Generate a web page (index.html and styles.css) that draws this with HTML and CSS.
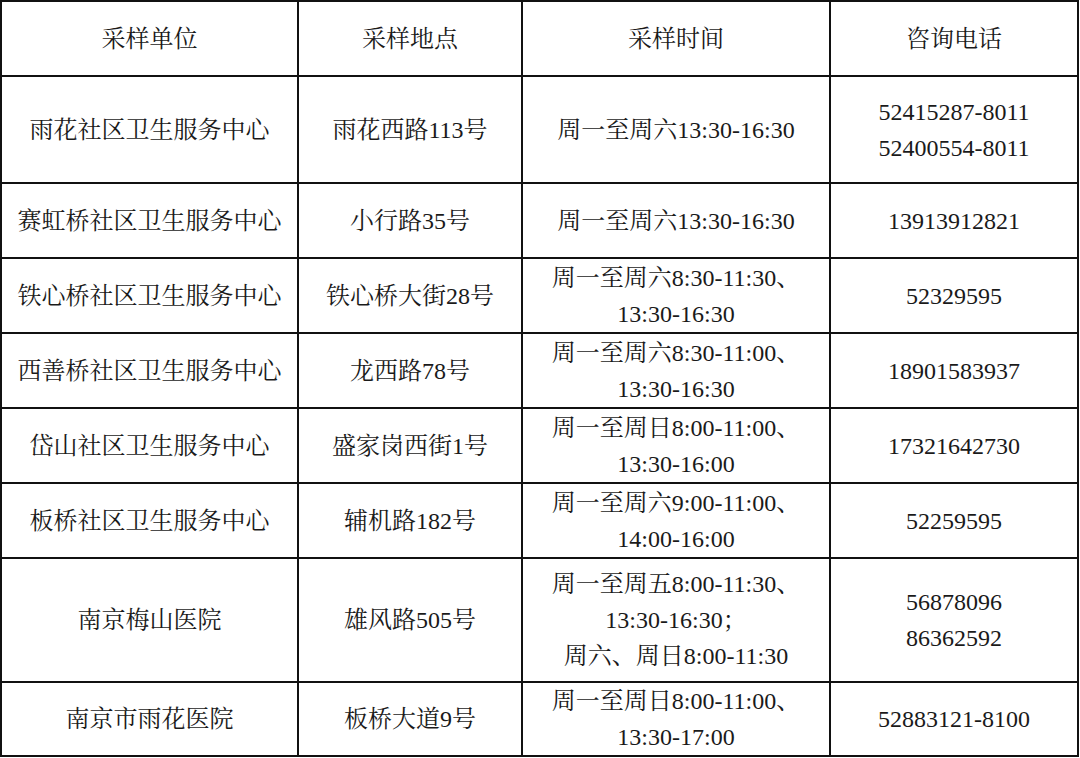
FILE: index.html
```html
<!DOCTYPE html>
<html lang="zh-CN">
<head>
<meta charset="utf-8">
<title>采样点信息</title>
<link rel="stylesheet" href="styles.css">
</head>
<body>
<table class="sites">
  <colgroup>
    <col class="c1"><col class="c2"><col class="c3"><col class="c4">
  </colgroup>
  <tr class="r-head">
    <td>采样单位</td><td>采样地点</td><td>采样时间</td><td>咨询电话</td>
  </tr>
  <tr class="r-tall">
    <td>雨花社区卫生服务中心</td><td>雨花西路113号</td><td>周一至周六13:30-16:30</td><td>52415287-8011<br>52400554-8011</td>
  </tr>
  <tr class="r-std">
    <td>赛虹桥社区卫生服务中心</td><td>小行路35号</td><td>周一至周六13:30-16:30</td><td>13913912821</td>
  </tr>
  <tr class="r-std">
    <td>铁心桥社区卫生服务中心</td><td>铁心桥大街28号</td><td>周一至周六8:30-11:30、<br>13:30-16:30</td><td>52329595</td>
  </tr>
  <tr class="r-std">
    <td>西善桥社区卫生服务中心</td><td>龙西路78号</td><td>周一至周六8:30-11:00、<br>13:30-16:30</td><td>18901583937</td>
  </tr>
  <tr class="r-std">
    <td>岱山社区卫生服务中心</td><td>盛家岗西街1号</td><td>周一至周日8:00-11:00、<br>13:30-16:00</td><td>17321642730</td>
  </tr>
  <tr class="r-std">
    <td>板桥社区卫生服务中心</td><td>辅机路182号</td><td>周一至周六9:00-11:00、<br>14:00-16:00</td><td>52259595</td>
  </tr>
  <tr class="r-big">
    <td>南京梅山医院</td><td>雄风路505号</td><td>周一至周五8:00-11:30、<br>13:30-16:30；<br>周六、周日8:00-11:30</td><td>56878096<br>86362592</td>
  </tr>
  <tr class="r-last">
    <td>南京市雨花医院</td><td>板桥大道9号</td><td>周一至周日8:00-11:00、<br>13:30-17:00</td><td>52883121-8100</td>
  </tr>
</table>
</body>
</html>
```

FILE: styles.css
```css
html, body {
  margin: 0;
  padding: 0;
  background: #ffffff;
}

.sites {
  table-layout: fixed;
  border-collapse: separate;
  border-spacing: 0;
  width: 1079px;
  border-top: 2px solid #111;
  border-left: 2px solid #111;
  font-family: "Liberation Serif", "Noto Serif CJK SC", "Noto Sans CJK SC", serif;
  font-size: 24px;
  line-height: 36px;
  color: #1a1a1a;
}

.c1 { width: 297px; }
.c2 { width: 224px; }
.c3 { width: 308px; }
.c4 { width: 248px; }

.sites td {
  box-sizing: border-box;
  padding: 0;
  border-right: 2px solid #111;
  border-bottom: 2px solid #111;
  text-align: center;
  vertical-align: middle;
  white-space: nowrap;
  overflow: hidden;
}

.r-head td { height: 75px; }
.r-tall td { height: 107px; }
.r-std td { height: 75px; }
.r-big td { height: 124px; }
.r-last td { height: 74px; }
```
